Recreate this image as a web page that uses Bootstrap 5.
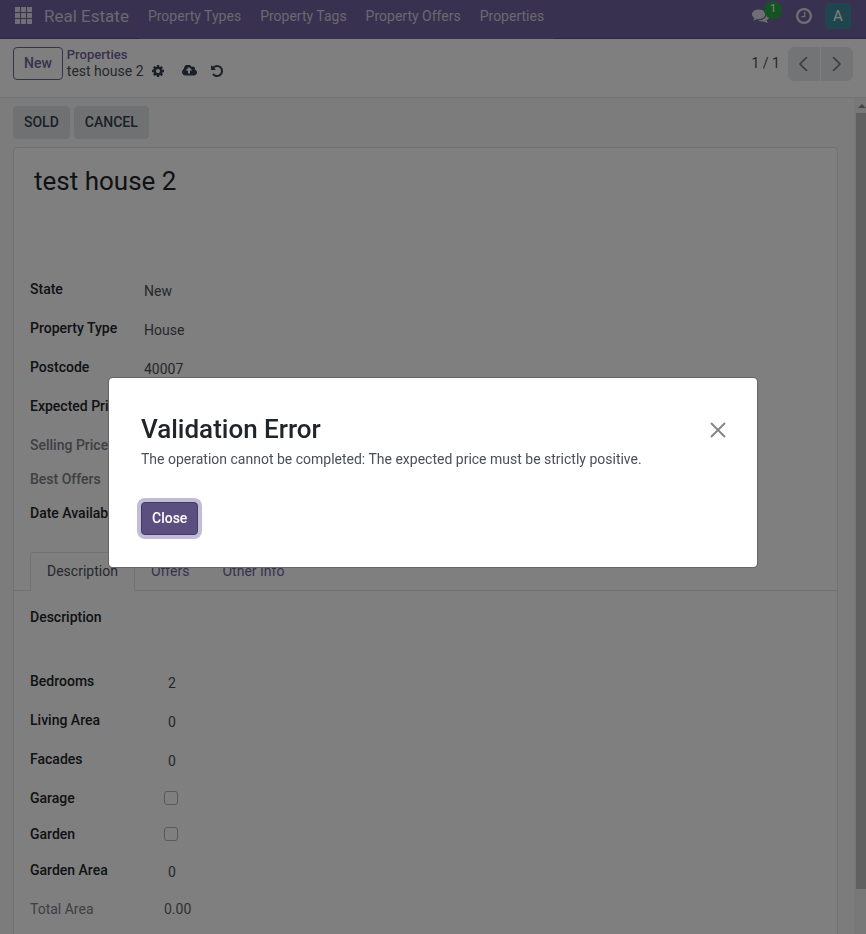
<!DOCTYPE html>
<html lang="en">
<head>
<meta charset="utf-8">
<meta name="viewport" content="width=device-width, initial-scale=1">
<title>Real Estate - test house 2</title>
<link href="https://cdn.jsdelivr.net/npm/bootstrap@5.3.0/dist/css/bootstrap.min.css" rel="stylesheet">
<style>
  body { font-family: Roboto, "Liberation Sans", sans-serif; font-size: 14px; line-height: 21px; color: #495057; background: #fff; }
  a { color: #71639e; text-decoration: none; }
  svg { display: block; fill: currentColor; }
  .btn { font-size: 14px; line-height: 21px; font-weight: 500; padding: 5px 10px; border-radius: 4px; }

  .topbar { height: 39px; background: #71639e; border-bottom: 1px solid #5a4f7f; color: #dfdde8; padding: 0 15px; }
  .topbar a { color: #d4d0e0; }
  .topbar .app-name { font-size: 17px; padding: 6px 10px 0 12px; }
  .app-menu { height: 39px; margin-bottom: -1px; background: #71639e; }
  .app-menu a { padding: 6px 10px 0 9px; }
  .icon-btn { background: none; border: 0; padding: 0; color: inherit; }
  .apps-btn { height: 30px; }
  .systray { gap: 27px; height: 31px; }
  .msg-count { position: absolute; left: 12px; top: -6px; width: 18px; height: 18px; border-radius: 9px; background: #28a745; color: #fff; font-size: 11px; line-height: 16px; text-align: center; }
  .avatar { width: 26px; height: 26px; border-radius: 4px; background: #3f8d9e; color: #fff; font-size: 15px; line-height: 27px; margin-left: -14px; }

  .control-panel { height: 59px; padding: 8px 13px 0; border-bottom: 1px solid #dee2e6; }
  .control-panel .btn-new { color: #71639e; border: 1px solid #71639e; height: 33px; }
  .crumbs { line-height: 16px; padding-left: 4px; color: #495057; margin-top: -1px; }
  .crumbs .parent { font-size: 13px; font-weight: 500; }
  .crumbs .dark { color: #374151; }
  .crumbs .act-save { margin: 0 14px 0 18px; }
  .pager { line-height: 32px; }
  .pager-btn { width: 32px; height: 34px; background: #e7e9ed; color: #6b7075; border: 0; padding: 0 9px; }
  .pager-next { width: 33px; }

  .view-body { background: #f8f9fa; }
  .scroll-track { width: 12px; background: #f1f1f1; padding-left: 2px; }
  .scroll-arrow { height: 15px; padding: 6px 0 0 2px; color: #8b8b8b; }
  .scroll-thumb { flex: 95 0 0; background: #c1c1c1; }
  .scroll-rest { flex: 5 0 0; padding-bottom: 4px; }
  .status-actions { padding: 8px 13px; gap: 4px; }
  .status-actions .btn { background: #dee2e6; color: #374151; border: 1px solid #dee2e6; height: 33px; }
  .sheet { background: #fff; border: 1px solid #dee2e6; border-radius: 4px; margin: 0 16px 0 13px; padding-bottom: 48px; }
  .sheet input, .sheet select { border: 0; background: none; padding: 0; color: #495057; font-size: 14px; line-height: 21px; height: 21px; appearance: none; min-width: 0; }
  .sheet .record-name { font-size: 26px; line-height: 32px; height: 32px; color: #212529; margin: 17px 20px 82px; width: 90%; }

  .fields { padding: 0 16px; color: #212529; }
  .field-row { display: flex; min-height: 39px; }
  .field-row label, .field-row .field-label { font-weight: 500; width: 134px; flex: none; white-space: nowrap; }
  .fields.narrow label, .fields.narrow .field-label { width: 114px; }
  .field-row.short { min-height: 34px; }
  .field-row.mid { min-height: 36px; }
  .field-row.tall { min-height: 64px; }
  .field-row .readonly { color: #7c8085; }
  .field-row input, .field-row select { margin-top: 2px; }
  .field-row .num { margin-left: 4px; }
  .sheet .field-row .tick { width: 14px; height: 14px; margin: 3px 0 0; border: 1px solid #adb5bd; border-radius: 3px; }

  .sheet .nav-tabs { padding: 0 16px; margin: 15px 0 16px; border-color: #dee2e6; }
  .sheet .nav-tabs .nav-link { padding: 8px 16px; color: #71639e; border-radius: 4px 4px 0 0; height: 39px; }
  .sheet .nav-tabs .nav-link.active { color: #495057; border-color: #dee2e6 #dee2e6 #fff; }
  .sheet .nav-tabs .nav-item + .nav-item { margin-left: -1px; }

  .error-modal { padding-top: 11px; }
  .error-modal .modal-dialog { max-width: 650px; }
  .error-modal .modal-content { border: 1px solid #666; border-radius: 4px; padding: 32px; }
  .error-modal h1 { font-size: 26px; line-height: 39px; font-weight: 500; color: #212529; margin: 0; }
  .error-modal .btn-primary { background: #5a4f7f; border-color: #443b5f; box-shadow: 0 0 0 4px #c3bcd8; height: 33px; }
  .close-x { color: #868686; margin-right: -1px; }
</style>
<script src="https://cdn.jsdelivr.net/npm/bootstrap@5.3.0/dist/js/bootstrap.bundle.min.js"></script>
</head>
<body>
<div class="d-flex flex-column vh-100 overflow-hidden">

  <header class="topbar d-flex flex-shrink-0">
    <button class="icon-btn apps-btn" aria-label="Apps">
      <svg width="17" height="17" viewBox="0 0 17 17"><path d="M0 0h5v5H0zM6 0h5v5H6zM12 0h5v5h-5zM0 6h5v5H0zM6 6h5v5H6zM12 6h5v5h-5zM0 12h5v5H0zM6 12h5v5H6zM12 12h5v5h-5z"/></svg>
    </button>
    <a class="app-name text-nowrap" href="#">Real Estate</a>
    <nav class="app-menu d-flex text-nowrap">
      <a href="#">Property Types</a>
      <a href="#">Property Tags</a>
      <a href="#">Property Offers</a>
      <a href="#">Properties</a>
    </nav>
    <div class="systray d-flex align-items-center ms-auto">
      <button class="icon-btn position-relative" aria-label="Messages">
        <svg width="17" height="17" viewBox="0 -1536 1792 1792"><path transform="scale(1,-1)" d="M1408 768q0 -139 -94 -257t-256.500 -186.500t-353.500 -68.500q-86 0 -176 16q-124 -88 -278 -128q-36 -9 -86 -16h-3q-11 0 -20.500 8t-11.500 21q-1 3 -1 6.500t0.500 6.500t2 6l2.500 5t3.500 5.500t4 5t4.500 5t4 4.500q5 6 23 25t26 29.500t22.500 29t25 38.500t20.500 44q-124 72 -195 177t-71 224q0 139 94 257t256.500 186.500t353.500 68.500t353.500 -68.500t256.500 -186.500t94 -257zM1792 512q0 -120 -71 -224.500t-195 -176.500q10 -24 20.500 -44t25 -38.500t22.500 -29t26 -29.500t23 -25q1 -1 4 -4.500t4.500 -5t4 -5t3.500 -5.500l2.500 -5t2 -6t0.500 -6.500t-1 -6.500q-3 -14 -13 -22t-22 -7q-50 7 -86 16q-154 40 -278 128q-90 -16 -176 -16q-271 0 -472 132q58 -4 88 -4q161 0 309 45t264 129q125 92 192 212t67 254q0 77 -23 152q129 -71 204 -178t75 -230z"/></svg>
        <span class="msg-count">1</span>
      </button>
      <button class="icon-btn" aria-label="Activities">
        <svg width="16" height="16" viewBox="0 -1408 1536 1536"><path transform="scale(1,-1)" d="M896 992v-448q0 -14 -9 -23t-23 -9h-320q-14 0 -23 9t-9 23v64q0 14 9 23t23 9h224v352q0 14 9 23t23 9h64q14 0 23 -9t9 -23zM1312 640q0 148 -73 273t-198 198t-273 73t-273 -73t-198 -198t-73 -273t73 -273t198 -198t273 -73t273 73t198 198t73 273zM1536 640q0 -209 -103 -385.500t-279.500 -279.500t-385.500 -103t-385.500 103t-279.500 279.500t-103 385.500t103 385.500t279.500 279.500t385.500 103t385.500 -103t279.500 -279.500t103 -385.500z"/></svg>
      </button>
      <button class="icon-btn avatar">A</button>
    </div>
  </header>

  <div class="control-panel d-flex align-items-start flex-shrink-0">
    <button class="btn btn-new">New</button>
    <div class="crumbs">
      <a class="parent" href="#">Properties</a>
      <div class="d-flex align-items-center">
        <span>test house 2</span>
        <button class="icon-btn dark ms-2" aria-label="Actions"><svg width="12" height="12" viewBox="0 -1408 1536 1536"><path transform="scale(1,-1)" d="M1024 640q0 106 -75 181t-181 75t-181 -75t-75 -181t75 -181t181 -75t181 75t75 181zM1536 749v-222q0 -12 -8 -23t-20 -13l-185 -28q-19 -54 -39 -91q35 -50 107 -138q10 -12 10 -25t-9 -23q-27 -37 -99 -108t-94 -71q-12 0 -26 9l-138 108q-44 -23 -91 -38q-16 -136 -29 -186q-7 -28 -36 -28h-222q-14 0 -24.500 8.500t-11.500 21.500l-28 184q-49 16 -90 37l-141 -107q-10 -9 -25 -9q-14 0 -25 11q-126 114 -165 168q-7 10 -7 23q0 12 8 23q15 21 51 66.500t54 70.500q-27 50 -41 99l-183 27q-13 2 -21 12.500t-8 23.500v222q0 12 8 23t19 13l186 28q14 46 39 92q-40 57 -107 138q-10 12 -10 24q0 10 9 23q26 36 98.500 107.500t94.500 71.500q13 0 26 -10l138 -107q44 23 91 38q16 136 29 186q7 28 36 28h222q14 0 24.500 -8.500t11.500 -21.500l28 -184q49 -16 90 -37l142 107q9 9 24 9q13 0 25 -10q129 -119 165 -170q7 -8 7 -22q0 -12 -8 -23q-15 -21 -51 -66.500t-54 -70.500q26 -50 41 -98l183 -28q13 -2 21 -12.500t8 -23.500z"/></svg></button>
        <button class="icon-btn dark act-save" aria-label="Save"><svg width="15" height="12" viewBox="0 -1344 1920 1536"><path transform="scale(1,-1)" d="M1280 672q0 14 -9 23l-352 352q-9 9 -23 9t-23 -9l-351 -351q-10 -12 -10 -24q0 -14 9 -23t23 -9h224v-352q0 -13 9.500 -22.500t22.500 -9.500h192q13 0 22.500 9.500t9.500 22.500v352h224q13 0 22.500 9.500t9.500 22.500zM1920 384q0 -159 -112.500 -271.500t-271.500 -112.500h-1088q-185 0 -316.500 131.500t-131.500 316.500q0 130 70 240t188 165q-2 30 -2 43q0 212 150 362t362 150q156 0 285.500 -87t188.500 -231q71 62 166 62q106 0 181 -75t75 -181q0 -76 -41 -138q130 -31 213.500 -135.500t83.500 -238.500z"/></svg></button>
        <button class="icon-btn dark" aria-label="Discard"><svg width="12" height="12" viewBox="0 -1408 1536 1536"><path transform="scale(1,-1)" d="M1536 640q0 -156 -61 -298t-164 -245t-245 -164t-298 -61q-172 0 -327 72.500t-264 204.500q-7 10 -6.500 22.500t8.500 20.500l137 138q10 9 25 9q16 -2 23 -12q73 -95 179 -147t225 -52q104 0 198.500 40.500t163.500 109.500t109.500 163.500t40.500 198.500t-40.500 198.500t-109.500 163.500t-163.500 109.500t-198.500 40.500q-98 0 -188 -35.500t-160 -101.500l137 -138q31 -30 14 -69q-17 -40 -59 -40h-448q-26 0 -45 19t-19 45v448q0 42 40 59q39 17 69 -14l130 -129q107 101 244.500 156.500t284.500 55.500q156 0 298 -61t245 -164t164 -245t61 -298z"/></svg></button>
      </div>
    </div>
    <div class="pager ms-auto d-flex">
      <span class="me-2">1 / 1</span>
      <div class="d-flex">
        <button class="pager-btn rounded-start" aria-label="Previous"><svg width="14" height="14" viewBox="0 0 14 14"><path d="M10 0L3 7l7 7" fill="none" stroke="currentColor" stroke-width="1.500"/></svg></button>
        <button class="pager-btn pager-next rounded-end border-start border-white" aria-label="Next"><svg width="14" height="14" viewBox="0 0 14 14"><path d="M3 0l7 7-7 7" fill="none" stroke="currentColor" stroke-width="1.500"/></svg></button>
      </div>
    </div>
  </div>

  <main class="view-body d-flex flex-grow-1 overflow-hidden">
    <div class="flex-grow-1 overflow-hidden">
      <div class="status-actions d-flex">
        <button class="btn">SOLD</button>
        <button class="btn">CANCEL</button>
      </div>
      <form class="sheet">
        <input class="record-name d-block" aria-label="Title" value="test house 2">
        <div class="fields narrow">
          <div class="field-row"><label for="state">State</label><select id="state"><option>New</option></select></div>
          <div class="field-row"><label for="ptype">Property Type</label><input id="ptype" value="House"></div>
          <div class="field-row"><label for="postcode">Postcode</label><input id="postcode" value="40007"></div>
          <div class="field-row"><label for="expected">Expected Price</label><input id="expected"></div>
          <div class="field-row short"><span class="field-label readonly">Selling Price</span></div>
          <div class="field-row short"><span class="field-label readonly">Best Offers</span></div>
          <div class="field-row short"><label for="available">Date Availability</label><input id="available"></div>
        </div>
        <ul class="nav nav-tabs">
          <li class="nav-item"><a class="nav-link active" href="#">Description</a></li>
          <li class="nav-item"><a class="nav-link" href="#">Offers</a></li>
          <li class="nav-item"><a class="nav-link" href="#">Other Info</a></li>
        </ul>
        <div class="fields">
          <div class="field-row tall"><label for="description">Description</label><input id="description"></div>
          <div class="field-row"><label for="bedrooms">Bedrooms</label><input class="num" id="bedrooms" value="2"></div>
          <div class="field-row"><label for="living">Living Area</label><input class="num" id="living" value="0"></div>
          <div class="field-row"><label for="facades">Facades</label><input class="num" id="facades" value="0"></div>
          <div class="field-row mid"><label for="garage">Garage</label><input class="tick" type="checkbox" id="garage"></div>
          <div class="field-row mid"><label for="garden">Garden</label><input class="tick" type="checkbox" id="garden"></div>
          <div class="field-row"><label for="garden-area">Garden Area</label><input class="num" id="garden-area" value="0"></div>
          <div class="field-row"><span class="field-label readonly fw-normal">Total Area</span><span class="text-body-secondary">0.00</span></div>
        </div>
      </form>
    </div>
    <div class="scroll-track d-flex flex-column flex-shrink-0" aria-hidden="true">
      <div class="scroll-arrow"><svg width="8" height="4" viewBox="0 0 8 4"><path d="M0 4l4-4 4 4z"/></svg></div>
      <div class="scroll-thumb"></div>
      <div class="scroll-rest"></div>
    </div>
  </main>
</div>

<div class="modal-backdrop show"></div>
<div class="modal d-block error-modal" role="dialog" aria-modal="true" aria-labelledby="error-title">
  <div class="modal-dialog modal-dialog-centered">
    <div class="modal-content">
      <div class="d-flex justify-content-between align-items-center">
        <h1 id="error-title">Validation Error</h1>
        <button class="icon-btn close-x" aria-label="Close dialog"><svg width="16" height="16" viewBox="0 0 16 16"><path d="M1 1l14 14M15 1L1 15" fill="none" stroke="currentColor" stroke-width="2"/></svg></button>
      </div>
      <p class="mb-0">The operation cannot be completed: The expected price must be strictly positive.</p>
      <div class="pt-3 mt-3"><button class="btn btn-primary">Close</button></div>
    </div>
  </div>
</div>
</body>
</html>
